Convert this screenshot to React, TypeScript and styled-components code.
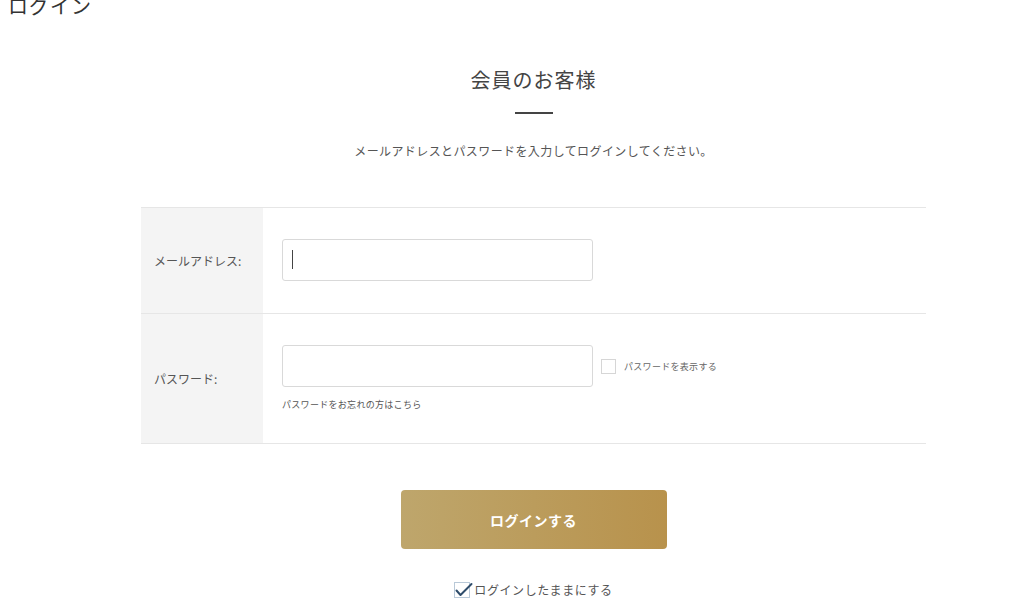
import React from "react";
import styled, { createGlobalStyle } from "styled-components";

const GlobalStyle = createGlobalStyle`
  html, body {
    margin: 0;
    padding: 0;
    background: #ffffff;
    overflow: hidden;
  }
  body {
    font-family: "Noto Sans CJK JP", "Noto Sans", sans-serif;
    color: #555;
  }
`;

const Page = styled.div`
  width: 1024px;
  height: 611px;
  overflow: hidden;
`;

const PageTitle = styled.h1`
  margin: -6px 0 0;
  padding-left: 8px;
  font-size: 20px;
  line-height: 24px;
  font-weight: 400;
  color: #333;
  letter-spacing: 1px;
`;

const Section = styled.section`
  width: 785px;
  margin-left: 141px;
  display: flex;
  flex-direction: column;
  align-items: center;
`;

const Heading = styled.h2`
  margin: 47px 0 0;
  font-size: 20px;
  line-height: 30px;
  font-weight: 400;
  color: #444;
  letter-spacing: 1px;
`;

const Divider = styled.div`
  width: 38px;
  height: 2px;
  margin-top: 17px;
  background: #444;
`;

const Lead = styled.p`
  margin: 27px 0 0;
  font-size: 12px;
  line-height: 20px;
  color: #555;
  letter-spacing: 0.4px;
`;

const FormTable = styled.div`
  width: 100%;
  margin-top: 46px;
  border-bottom: 1px solid #e6e6e6;
`;

const Row = styled.div`
  display: grid;
  grid-template-columns: 122px 1fr;
  border-top: 1px solid #e6e6e6;
`;

const Label = styled.div`
  background: #f4f4f4;
  display: flex;
  align-items: center;
  padding-left: 13px;
  font-size: 12px;
  color: #555;
`;

const Field = styled.div`
  padding: 31px 0 32px 19px;
`;

const InputLine = styled.div`
  display: flex;
  align-items: center;
  gap: 8px;
`;

const InputWrap = styled.div`
  position: relative;
  width: 311px;
  height: 42px;
`;

const TextInput = styled.input`
  box-sizing: border-box;
  width: 311px;
  height: 42px;
  border: 1px solid #d9d9d9;
  border-radius: 3px;
  padding: 0 10px;
  font-size: 14px;
  outline: none;
  background: #fff;
`;

const Caret = styled.span`
  position: absolute;
  left: 10px;
  top: 11px;
  width: 1px;
  height: 19px;
  background: #444;
`;

const Box = styled.span<{ $checked?: boolean }>`
  box-sizing: border-box;
  width: ${(p) => (p.$checked ? 16 : 15)}px;
  height: ${(p) => (p.$checked ? 16 : 15)}px;
  border: 1px solid ${(p) => (p.$checked ? "#b9c9d8" : "#d6d6d6")};
  background: #fff;
  display: inline-flex;
  align-items: flex-end;
  justify-content: flex-start;
  flex-shrink: 0;
  overflow: visible;
`;

const SmallText = styled.span`
  font-size: 9px;
  line-height: 13px;
  color: #666;
  letter-spacing: 0.3px;
`;

const ForgotLink = styled.a`
  display: block;
  margin-top: 11px;
  font-size: 9px;
  line-height: 13px;
  color: #555;
  text-decoration: none;
  letter-spacing: 0.3px;
`;

const SubmitButton = styled.button`
  margin-top: 46px;
  width: 266px;
  height: 59px;
  border: none;
  border-radius: 4px;
  background: linear-gradient(90deg, #bea66c 0%, #b8924c 100%);
  color: #fff;
  font-family: inherit;
  font-size: 14px;
  font-weight: 700;
  letter-spacing: 0.5px;
`;

const Remember = styled.label`
  margin-top: 33px;
  display: flex;
  align-items: center;
  gap: 4px;
  font-size: 12px;
  line-height: 16px;
  color: #555;
  letter-spacing: 0.6px;
`;

const Check = () => (
  <svg width="18" height="15" viewBox="0 0 18 15" style={{ flexShrink: 0, marginBottom: 0 }}>
    <path d="M1.5 8.5 L5.5 13 L16.5 2" fill="none" stroke="#2f4d6b" strokeWidth="2" strokeLinecap="round" strokeLinejoin="round" />
  </svg>
);

export default function App() {
  return (
    <Page>
      <GlobalStyle />
      <PageTitle>ログイン</PageTitle>
      <Section>
        <Heading>会員のお客様</Heading>
        <Divider />
        <Lead>メールアドレスとパスワードを入力してログインしてください。</Lead>
        <FormTable>
          <Row>
            <Label>メールアドレス:</Label>
            <Field>
              <InputWrap>
                <TextInput type="email" />
                <Caret />
              </InputWrap>
            </Field>
          </Row>
          <Row>
            <Label>パスワード:</Label>
            <Field>
              <InputLine>
                <TextInput type="password" />
                <Box />
                <SmallText>パスワードを表示する</SmallText>
              </InputLine>
              <ForgotLink href="#">パスワードをお忘れの方はこちら</ForgotLink>
            </Field>
          </Row>
        </FormTable>
        <SubmitButton type="button">ログインする</SubmitButton>
        <Remember>
          <Box $checked>
            <Check />
          </Box>
          ログインしたままにする
        </Remember>
      </Section>
    </Page>
  );
}
